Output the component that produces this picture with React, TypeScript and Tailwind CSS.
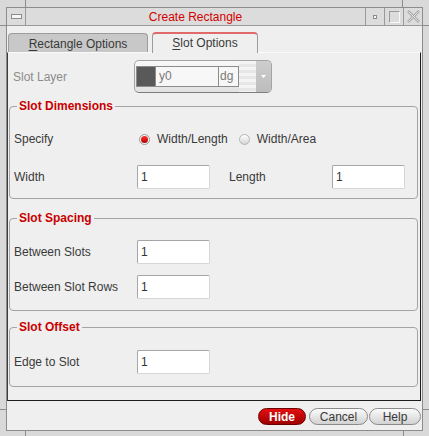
import type { ReactNode } from 'react';

const label = 'text-[12px] leading-[14px] text-[#3a3a3a]';

function Field({ value = '1' }: { value?: string }) {
  return (
    <div className="flex h-[24px] w-[73px] items-center rounded-[2px] border border-[#a6a6a6] border-r-[#d6d6d6] border-b-[#d6d6d6] bg-white pl-[3px] text-[12px] leading-[14px] text-[#333]">
      {value}
    </div>
  );
}

function Row({ title, className = '', children }: { title: string; className?: string; children: ReactNode }) {
  return (
    <div className={`flex h-[24px] items-center pl-[4px] ${className}`}>
      <span className={`w-[123px] ${label}`}>{title}</span>
      {children}
    </div>
  );
}

function Group({ title, className = '', children }: { title: string; className?: string; children: ReactNode }) {
  return (
    <fieldset className={`ml-[1px] mr-[2px] rounded-[4px] border border-[#a4a4a4] ${className}`}>
      <legend className="ml-[7px] px-[2px] text-[12px] font-bold leading-[14px] text-[#c80000]">{title}</legend>
      {children}
    </fieldset>
  );
}

function Radio({ on }: { on?: boolean }) {
  if (on) {
    return (
      <span className="flex h-[11px] w-[11px] shrink-0 items-center justify-center rounded-full border border-[#9a9a9a] bg-[#f4f4f4]">
        <span className="h-[7px] w-[7px] rounded-full bg-linear-to-b from-[#ff3030] to-[#b00000]" />
      </span>
    );
  }
  return <span className="block h-[11px] w-[11px] shrink-0 rounded-full border border-[#b4b4b4] bg-linear-to-b from-white to-[#d4d4d4]" />;
}

function Button({ children, primary, w }: { children: ReactNode; primary?: boolean; w: string }) {
  return (
    <div
      className={`flex h-[17px] items-center justify-center rounded-full border text-[12px] leading-[14px] ${w} ${
        primary
          ? 'border-[#6a0000] bg-linear-to-b from-[#e41010] to-[#a00000] font-bold text-white'
          : 'border-[#8a8a8a] bg-linear-to-b from-[#fbfbfb] to-[#d2d2d2] text-[#3a3a3a]'
      }`}
    >
      {children}
    </div>
  );
}

export default function App() {
  return (
    <div className="relative h-[436px] w-[429px] bg-[#d9d9d9] px-[6px] pt-[7px] font-['Liberation_Sans',Arial,sans-serif]">
      {/* frame grip marks */}
      <span className="absolute left-[25px] top-0 h-[7px] w-px bg-[#8c8c8c]" />
      <span className="absolute left-[402px] top-0 h-[7px] w-px bg-[#8c8c8c]" />
      <span className="absolute left-0 top-[25px] h-px w-[6px] bg-[#8c8c8c]" />
      <span className="absolute right-0 top-[25px] h-px w-[6px] bg-[#8c8c8c]" />
      <span className="absolute left-0 top-[409px] h-px w-[6px] bg-[#8c8c8c]" />
      <span className="absolute right-0 top-[409px] h-px w-[6px] bg-[#8c8c8c]" />
      <span className="absolute left-[25px] top-[431px] h-[5px] w-px bg-[#8c8c8c]" />
      <span className="absolute left-[403px] top-[431px] h-[5px] w-px bg-[#8c8c8c]" />

      <div className="flex h-[424px] flex-col border border-[#8c8c8c] bg-[#efefef]">
        {/* Title bar */}
        <div className="flex h-[18px] shrink-0 border-b border-[#9a9a9a] bg-[#dcdcdc]">
          <div className="flex w-[19px] items-center justify-center border-r border-[#9a9a9a]">
            <span className="h-[5px] w-[11px] border border-[#8c8c8c] bg-[#f6f6f6]" />
          </div>
          <div className="flex flex-1 items-center justify-center text-[12px] leading-[14px] text-[#d40000]">
            Create Rectangle
          </div>
          <div className="flex w-[19px] items-center justify-center border-l border-[#9a9a9a]">
            <span className="h-[4px] w-[4px] border border-[#8c8c8c] bg-[#f6f6f6]" />
          </div>
          <div className="flex w-[19px] items-center justify-center border-l border-[#9a9a9a]">
            <span className="h-[12px] w-[11px] border border-[#9a9a9a] border-r-[#f8f8f8] border-b-[#f8f8f8]" />
          </div>
          <div className="flex w-[19px] items-center justify-center border-l border-[#9a9a9a]">
            <svg width="13" height="13" viewBox="0 0 13 13">
              <path d="M1 1L12 12M12 1L1 12" stroke="#a8a8a8" strokeWidth="2.5" />
              <path d="M1.5 1.5L11.5 11.5M11.5 1.5L1.5 11.5" stroke="#f4f4f4" strokeWidth="0.8" />
            </svg>
          </div>
        </div>

        {/* Tabs */}
        <div className="flex h-[26px] shrink-0 items-start pl-[1px]">
          <div className={`mt-[7px] flex h-[19px] w-[140px] justify-center rounded-t-[4px] border border-b-0 border-[#9c9c9c] bg-[#c8c8c8] pt-[3px] ${label}`}>
            <span>
              <span className="underline underline-offset-2">R</span>ectangle Options
            </span>
          </div>
          <div className={`relative z-10 ml-[4px] mt-[6px] flex h-[21px] w-[106px] justify-center rounded-t-[4px] border border-b-0 border-[#9c9c9c] border-t-2 border-t-[#e06a6a] bg-[#efefef] pt-[2px] ${label}`}>
            <span>
              <span className="underline underline-offset-2">S</span>lot Options
            </span>
          </div>
        </div>

        {/* Panel */}
        <div className="mr-[1px] flex h-[349px] shrink-0 flex-col border border-t-[#fafafa] border-l-[#3c3c3c] border-r-[#1c1c1c] border-b-[#1c1c1c] bg-[#efefef]">
          <div className="mt-[7px] flex items-center pl-[5px]">
            <span className="w-[121px] text-[12px] leading-[14px] text-[#8c8c8c]">Slot Layer</span>
            <div className="flex h-[33px] w-[138px] items-center rounded-[5px] border border-[#a4a4a4] border-b-[#7c7c7c] bg-linear-to-b from-[#f8f8f8] to-[#e2e2e2] pl-[1px]">
              <div className="flex h-[21px] w-[103px] border border-[#8c8c8c] bg-[#f7f7f7] text-[12px] leading-[19px] text-[#7a7a7a]">
                <span className="w-[18px] bg-[#595959]" />
                <span className="flex-1 border-l border-[#8c8c8c] pl-[3px]">y0</span>
                <span className="w-[20px] border-l border-[#8c8c8c] pl-[1px]">dg</span>
              </div>
              <div className="h-full flex-1 bg-[repeating-linear-gradient(180deg,#f4f4f4_0px,#f4f4f4_3px,#e6e6e6_3px,#e6e6e6_6px)]" />
              <div className="flex h-full w-[15px] items-center justify-center rounded-r-[4px] bg-linear-to-b from-[#cdcdcd] to-[#bdbdbd]">
                <svg width="5" height="3" viewBox="0 0 5 3">
                  <path d="M0 0H5L2.5 3Z" fill="#ffffff" />
                </svg>
              </div>
            </div>
          </div>

          <Group title="Slot Dimensions" className="mt-[6px] pb-[9px]">
            <Row title="Specify" className="mt-[14px]">
              <span className="ml-[2px] flex items-center">
                <Radio on />
                <span className={`ml-[7px] ${label}`}>Width/Length</span>
                <span className="ml-[11px] flex">
                  <Radio />
                </span>
                <span className={`ml-[7px] ${label}`}>Width/Area</span>
              </span>
            </Row>
            <Row title="Width" className="mt-[14px]">
              <Field />
              <span className={`ml-[19px] w-[103px] ${label}`}>Length</span>
              <Field />
            </Row>
          </Group>

          <Group title="Slot Spacing" className="mt-[12px] pb-[11px]">
            <Row title="Between Slots" className="mt-[15px]">
              <Field />
            </Row>
            <Row title="Between Slot Rows" className="mt-[11px]">
              <Field />
            </Row>
          </Group>

          <Group title="Slot Offset" className="mt-[9px] pb-[12px]">
            <Row title="Edge to Slot" className="mt-[16px]">
              <Field />
            </Row>
          </Group>
        </div>

        {/* Buttons */}
        <div className="flex flex-1 items-start justify-end pr-[1px] pt-[7px]">
          <Button primary w="w-[48px]">Hide</Button>
          <span className="w-[3px]" />
          <Button w="w-[59px]">Cancel</Button>
          <span className="w-[1px]" />
          <Button w="w-[52px]">Help</Button>
        </div>
      </div>
    </div>
  );
}
